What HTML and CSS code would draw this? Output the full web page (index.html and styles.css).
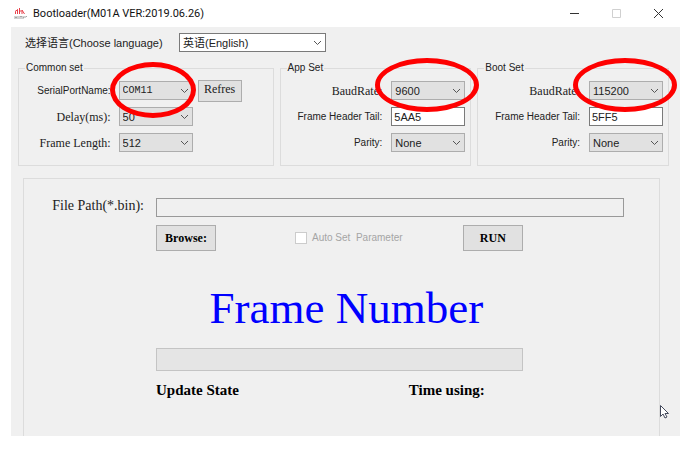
FILE: index.html
```
<!DOCTYPE html>
<html lang="en">
<head>
    <title>Bootloader</title>
    <meta charset="utf-8">
    <link rel="stylesheet" href="styles.css">
</head>
<body>
    <div class="window">
        <div class="titlebar">
            <svg class="logo" width="14" height="13" viewBox="0 0 14 13">
                <path d="M1.500 7V4.500M3.500 7V2.500M5.500 7V1M5.500 4h2M8 7V3l2.500 4M1 4.500l3-2" fill="none" stroke="#e8414b"/>
                <path d="M1 9v3M1 10.500h2M3 9v3M5 9v3M6 9.500h2M7 9v3M9 9v3M9 10.500h1M11 9v2M12 9.500h1" fill="none" stroke="#a5a5a5"/>
            </svg>
            <span class="title">Bootloader(M01A VER:2019.06.26)</span>
            <div class="window-buttons">
                <button type="button" aria-label="Minimize"><svg width="11" height="11"><path d="M1 5.500h9" stroke="#333"/></svg></button>
                <button type="button" aria-label="Maximize" disabled><svg width="11" height="11"><path d="M1.500 1.500h8v8h-8z" fill="none" stroke="#d0d0d0"/></svg></button>
                <button type="button" aria-label="Close"><svg width="11" height="11"><path d="M1 1l9 9M10 1l-9 9" stroke="#333"/></svg></button>
            </div>
        </div>

        <div class="client">
            <div class="language">
                <label for="language">选择语言(Choose language)</label>
                <select id="language" class="combo combo-light"><option>英语(English)</option></select>
            </div>

            <div class="groups">
                <fieldset class="group group-common">
                    <legend>Common set</legend>
                    <div class="fields">
                        <label for="port">SerialPortName:</label>
                        <div class="marked">
                            <select id="port" class="combo mono"><option>COM11</option></select>
                            <span class="ring"></span>
                        </div>
                        <button type="button" class="button refresh">Refres</button>
                        <label for="delay" class="song">Delay(ms):</label>
                        <select id="delay" class="combo"><option>50</option></select>
                        <label for="length" class="song first">Frame Length:</label>
                        <select id="length" class="combo"><option>512</option></select>
                    </div>
                </fieldset>

                <fieldset class="group">
                    <legend>App Set</legend>
                    <div class="fields">
                        <label for="app-baud" class="song">BaudRate:</label>
                        <div class="marked">
                            <select id="app-baud" class="combo"><option>9600</option></select>
                            <span class="ring ring-wide"></span>
                        </div>
                        <label for="app-tail">Frame Header Tail:</label>
                        <input id="app-tail" class="textbox" type="text" value="5AA5">
                        <label for="app-parity">Parity:</label>
                        <select id="app-parity" class="combo"><option>None</option></select>
                    </div>
                </fieldset>

                <fieldset class="group">
                    <legend>Boot Set</legend>
                    <div class="fields">
                        <label for="boot-baud" class="song">BaudRate:</label>
                        <div class="marked">
                            <select id="boot-baud" class="combo"><option>115200</option></select>
                            <span class="ring ring-wide"></span>
                        </div>
                        <label for="boot-tail">Frame Header Tail:</label>
                        <input id="boot-tail" class="textbox" type="text" value="5FF5">
                        <label for="boot-parity">Parity:</label>
                        <select id="boot-parity" class="combo"><option>None</option></select>
                    </div>
                </fieldset>
            </div>

            <div class="panel">
                <label for="path" class="path-label">File Path(*.bin):</label>
                <input id="path" class="path" type="text" readonly>
                <div class="actions">
                    <button type="button" class="button action">Browse:</button>
                    <label class="auto"><input type="checkbox" disabled>Auto Set&nbsp; Parameter</label>
                    <button type="button" class="button action run">RUN</button>
                </div>
                <h1 class="frame-number">Frame Number</h1>
                <div class="progress" role="progressbar" aria-label="Update progress"></div>
                <div class="status">
                    <span>Update State</span>
                    <span>Time using:</span>
                </div>
            </div>

            <svg class="cursor" width="11" height="16" viewBox="0 0 11 16">
                <path d="M1.500 1.500v11l2.500-2.500 2 4 2-1-2-3.500h3.500z" fill="#fff" stroke="#444a5c"/>
            </svg>
        </div>
    </div>
</body>
</html>
```
FILE: styles.css
```
* {
    box-sizing: border-box;
}

body {
    margin: 0;
    background-color: white;
    color: #222;
    font-family: "Liberation Sans", "Noto Sans CJK SC", sans-serif;
    font-size: 11px;
    line-height: 14px;
}

button, input, select {
    font: inherit;
    color: inherit;
    margin: 0;
}

.window {
    margin: 0 5px 0 11px;
}

.titlebar {
    display: flex;
    align-items: center;
    height: 27px;
    padding: 0 16px 0 3px;
    gap: 5px;
}

.title {
    font-family: Roboto, "Noto Sans", sans-serif;
    color: #111;
}

.window-buttons {
    display: flex;
    gap: 31px;
    margin-left: auto;
}

.window-buttons button {
    display: flex;
    padding: 0;
    border: none;
    background: none;
}

.client {
    position: relative;
    background-color: #f0f0f0;
}

.language {
    display: flex;
    align-items: center;
    padding: 6px 14px 9px;
}

.language label {
    width: 154px;
}

.language .combo {
    width: 147px;
}

.combo {
    display: block;
    width: 100%;
    height: 19px;
    padding: 0 18px 0 3px;
    border: 1px solid #adadad;
    border-radius: 0;
    appearance: none;
    background: #e1e1e1 url("data:image/svg+xml,%3Csvg xmlns='http://www.w3.org/2000/svg' width='9' height='6'%3E%3Cpath d='M1 1l3.500 3.500L8 1' fill='none' stroke='%23555'/%3E%3C/svg%3E") no-repeat right 3px center;
}

.combo-light {
    background-color: white;
    border-color: #7a7a7a;
}

.textbox {
    width: 100%;
    height: 19px;
    padding: 0 2px;
    border: 1px solid #7a7a7a;
    background-color: white;
}

.mono {
    font-family: "Liberation Mono", monospace;
    font-size: 10px;
}

.groups {
    display: grid;
    grid-template-columns: 256fr 192fr 192fr;
    gap: 6px;
    padding: 0 11px 0 7px;
}

.group {
    min-width: 0;
    margin: 0;
    padding: 6px 5px 13px;
    border: 1px solid #dcdcdc;
}

.group legend {
    margin-left: 1px;
    padding: 0 1px;
    font-size: 10px;
}

.fields {
    display: grid;
    grid-template-columns: 1fr 74px;
    grid-auto-rows: 19px;
    gap: 7px 9px;
    align-items: center;
}

.fields label {
    font-size: 10px;
    text-align: right;
    white-space: nowrap;
}

.fields .song {
    font-family: "Liberation Serif", serif;
    font-size: 12px;
}

.group-common {
    padding-right: 31px;
}

.group-common .fields {
    grid-template-columns: 1fr 74px 44px;
    column-gap: 5px;
}

.group-common label {
    padding-right: 3px;
}

.fields .first {
    grid-column: 1;
}

.marked {
    position: relative;
}

/* red rings drawn over the port and baud rate boxes */
.ring {
    position: absolute;
    inset: -19px -3px -18px -9px;
    border: 5px solid #fe0000;
    border-radius: 50%;
    pointer-events: none;
    z-index: 1;
}

.ring-wide {
    inset: -23px -14px -12px -16px;
}

.button {
    padding: 0;
    border: 1px solid #adadad;
    background-color: #e1e1e1;
    font-family: "Liberation Serif", serif;
    font-size: 12px;
}

.refresh {
    height: 22px;
    padding-bottom: 4px;
}

.panel {
    display: grid;
    grid-template-columns: 120px 366fr 89fr;
    column-gap: 12px;
    margin: 12px 20px 0 12px;
    padding: 19px 35px 39px 0;
    border: 1px solid #dcdcdc;
    border-bottom: none;
}

.path-label {
    font-family: "Liberation Serif", serif;
    font-size: 14px;
    line-height: 16px;
    text-align: right;
}

.path {
    grid-column: 2 / 4;
    width: 100%;
    height: 19px;
    border: 1px solid #999;
    background-color: #f0f0f0;
}

.actions, .frame-number, .progress, .status {
    grid-column: 2;
}

.actions {
    display: flex;
    align-items: center;
    margin-top: 8px;
}

.action {
    width: 60px;
    height: 26px;
    color: black;
    font-weight: bold;
}

.auto {
    display: flex;
    align-items: center;
    gap: 5px;
    margin-left: 79px;
    color: #a5a5a5;
    font-size: 10px;
    white-space: nowrap;
}

.auto input {
    width: 12px;
    height: 12px;
    border: 1px solid #ccc;
    appearance: none;
    background-color: white;
}

.run {
    margin-left: auto;
}

.frame-number {
    margin: 30px 0 13px;
    padding-left: 14px;
    color: #0000ff;
    font-family: "Liberation Serif", serif;
    font-size: 45px;
    font-weight: normal;
    line-height: 54px;
    text-align: center;
    white-space: nowrap;
}

.progress {
    height: 23px;
    border: 1px solid #c4c4c4;
    background-color: #e5e5e5;
}

.status {
    display: flex;
    justify-content: space-between;
    margin-top: 12px;
    padding-right: 38px;
    color: black;
    font-family: "Liberation Serif", serif;
    font-size: 15px;
    font-weight: bold;
    line-height: 14px;
}

.cursor {
    position: absolute;
    right: 10px;
    bottom: 16px;
}
```
